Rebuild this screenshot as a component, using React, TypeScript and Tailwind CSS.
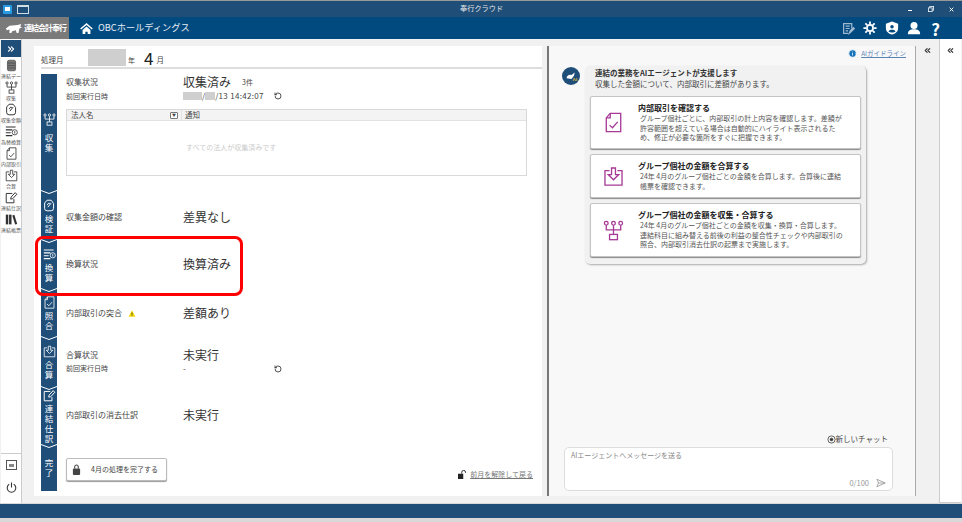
import React from 'react';
import { ChevronsLeft, ChevronsRight, Info, RotateCcw } from 'lucide-react';

type IconProps = { className?: string };

const Tree = ({ className }: IconProps) => (
  <svg viewBox="0 0 16 16" fill="none" stroke="currentColor" strokeWidth="1" className={className}>
    <circle cx="2.5" cy="2.5" r="1.4" />
    <circle cx="8" cy="2.5" r="1.4" />
    <circle cx="13.5" cy="2.5" r="1.4" />
    <path d="M2.5 4v3.5h11V4M8 4v7" />
    <rect x="5" y="11" width="6" height="4" />
  </svg>
);

const Coin = ({ className }: IconProps) => (
  <svg viewBox="0 0 16 16" fill="none" stroke="currentColor" strokeWidth="1.2" className={className}>
    <path d="M5 1.5h5l3 4v6a3 3 0 0 1-3 3H5a3 3 0 0 1-3-3V5z" />
    <path d="M6 10l4-5M5.5 7.5a2 2 0 0 1 3-2" />
  </svg>
);

const Convert = ({ className }: IconProps) => (
  <svg viewBox="0 0 16 16" fill="none" stroke="currentColor" strokeWidth="1.4" className={className}>
    <path d="M1 2.5h12M1 6h8M1 9.5h6M1 13h8" />
    <circle cx="12" cy="9" r="3.2" strokeWidth="1" />
    <path d="M12 7.5v3" strokeWidth="1" />
  </svg>
);

const DocCheck = ({ className }: IconProps) => (
  <svg viewBox="0 0 16 16" fill="none" stroke="currentColor" strokeWidth="1" className={className}>
    <path d="M5.5 1H13.5V15H2.5V4.5z" />
    <path d="M5.5 1v3.5h-3M5 10l2.2 2 4-4.5" />
  </svg>
);

const Tray = ({ className }: IconProps) => (
  <svg viewBox="0 0 16 16" fill="none" stroke="currentColor" strokeWidth="1" className={className}>
    <path d="M5 3.5H1.5v11h13v-11H11" />
    <path d="M6.5 1.5h3v5H12L8 10.5 4 6.500h2.500z" />
  </svg>
);

const Journal = ({ className }: IconProps) => (
  <svg viewBox="0 0 16 16" fill="none" stroke="currentColor" strokeWidth="1.2" className={className}>
    <path d="M9 3H1.500v11.500H11V10" />
    <path d="M7 10l.5-2.500L12.500 2l2 2-5 5.500z" />
  </svg>
);

const Books = ({ className }: IconProps) => (
  <svg viewBox="0 0 16 16" fill="currentColor" className={className}>
    <rect x="1" y="2" width="3" height="12" />
    <rect x="5" y="2" width="3" height="12" />
    <path d="M9 3l2.500-.8L15 13.400l-2.600.8z" />
  </svg>
);

const Database = ({ className }: IconProps) => (
  <svg viewBox="0 0 16 16" fill="#777" stroke="#444" strokeWidth="0.8" className={className}>
    <rect x="3" y="1.500" width="10" height="13" rx="2" />
    <path d="M3 5h10M3 8h10M3 11h10" fill="none" />
  </svg>
);

const sideItems = [
  { label: '連結デー', Icon: Database },
  { label: '収集', Icon: Tree },
  { label: '収集金額', Icon: Coin },
  { label: '為替換算', Icon: Convert },
  { label: '内部取引', Icon: DocCheck },
  { label: '合算', Icon: Tray },
  { label: '連結仕訳', Icon: Journal },
  { label: '連結帳票', Icon: Books },
];

const Chevron = () => (
  <svg viewBox="0 0 16 5" className="absolute -top-[2px] left-0 h-[5px] w-4" fill="none" stroke="white" strokeWidth="1">
    <path d="M0 .5 8 3.500 16 .5" />
  </svg>
);

const Segment = ({
  chars,
  Icon,
  first,
  height,
  children,
}: {
  chars: string;
  Icon?: React.FC<IconProps>;
  first?: boolean;
  height: string;
  children: React.ReactNode;
}) => (
  <div className={`flex ${height}`}>
    <div className="relative flex w-4 shrink-0 flex-col items-center justify-center bg-[#1f4e79] text-white">
      {!first && <Chevron />}
      {Icon && <Icon className={`h-[13px] w-[13px] ${first ? 'mb-[8px]' : 'mb-[3px]'}`} />}
      <span className="text-[8.500px] leading-[16px] tracking-[1.500px] [writing-mode:vertical-rl]">{chars}</span>
    </div>
    <div className="min-w-0 flex-1 pl-[9px]">{children}</div>
  </div>
);

const StatusRow = ({
  label,
  value,
  extra,
  className,
}: {
  label: React.ReactNode;
  value: string;
  extra?: React.ReactNode;
  className?: string;
}) => (
  <div className={`flex items-center ${className ?? ''}`}>
    <div className="flex w-[117px] items-center text-[8px] leading-[12px] text-[#444]">{label}</div>
    <div className="text-[12px] leading-[16px] text-[#333]">{value}</div>
    {extra}
  </div>
);

const ActionCard = ({
  Icon,
  iconSize,
  title,
  lines,
  height,
}: {
  Icon: React.FC<IconProps>;
  iconSize: string;
  title: string;
  lines: string[];
  height: string;
}) => (
  <div className={`flex rounded-[2px] border border-[#c4c4c4] bg-white shadow-[0_1px_1px_#888] ${height}`}>
    <div className="flex w-[47px] shrink-0 items-center justify-center pr-[3px] text-[#a63a96]">
      <Icon className={iconSize} />
    </div>
    <div className="pt-[5px]">
      <div className="text-[8px] leading-[12px] font-bold text-[#222]">{title}</div>
      <div className="pl-[2px] text-[7px] leading-[9.500px] text-[#555]">
        {lines.map((l) => (
          <div key={l}>{l}</div>
        ))}
      </div>
    </div>
  </div>
);

export default function App() {
  return (
    <div className="relative flex h-[522px] w-[962px] flex-col overflow-hidden bg-[#d9d9d9] font-['Noto_Sans_CJK_JP','Noto_Sans',sans-serif]">
      {/* window title */}
      <div className="relative flex h-[17px] shrink-0 items-center border-t border-[#999] bg-[#1f4e79] pl-[3px] text-white">
        <div className="flex h-[9px] w-[9px] items-center justify-center rounded-[1px] bg-[#2a9be0]">
          <div className="h-[4px] w-[5px] bg-white" />
        </div>
        <div className="ml-[5px] h-[9px] w-[12px] border border-t-2 border-white/80" />
        <div className="flex-1 pl-[431px] text-[7.200px] leading-none text-[#e8e8e8]">奉行クラウド</div>
        <div className="flex w-[54px] items-center justify-between pr-[8px] text-[8px] leading-none">
          <span className="mt-[3px] h-px w-[4px] bg-white" />
          <svg viewBox="0 0 8 8" className="h-[6px] w-[6px]" fill="none" stroke="white">
            <rect x="2.500" y=".5" width="5" height="5" />
            <rect x=".5" y="2.500" width="5" height="5" fill="#1f4e79" />
          </svg>
          <svg viewBox="0 0 8 8" className="h-[5px] w-[5px]" stroke="white" strokeWidth="1.500">
            <path d="M1 1l6 6M7 1 1 7" />
          </svg>
        </div>
      </div>

      {/* app header */}
      <div className="flex h-[22px] shrink-0 items-center bg-[#004a80] text-white">
        <div className="flex h-full w-[69px] items-center bg-[#7a7a7a] pl-[5px]">
          <svg viewBox="0 0 20 12" className="h-[11px] w-[18px] shrink-0" fill="white">
            <path d="M1 6 5 3l9-1 4-1-1 3 2 1-3 1-1 5h-2l-1-3-4 1-1 2H5l0-4-3 1z" />
          </svg>
          <span className="ml-px text-[8px] leading-none font-bold tracking-[-1px] whitespace-nowrap">連結会計奉行</span>
        </div>
        <svg viewBox="0 0 16 14" className="ml-[11px] h-[11px] w-[13px]" fill="white">
          <path d="M8 0 0 7l1.200 1.200L8 2.400l6.800 5.800L16 7z" />
          <path d="M3 9 8 4.500 13 9v5H9.500v-3h-3v3H3z" />
        </svg>
        <span className="ml-[5px] text-[9.200px] leading-none text-[#e8eef5]">OBCホールディングス</span>
        <div className="ml-auto flex items-center gap-[8px] pr-[22px]">
          <svg viewBox="0 0 16 16" className="h-[13px] w-[13px]" fill="none" stroke="#9fb8d0" strokeWidth="1.500">
            <path d="M12 8V2H2v12h6M4.500 5h5M4.500 8h5M4.500 11h3" />
            <path d="M9 14l1-3 4-4 1.200 1.200-4 4z" fill="#9fb8d0" />
          </svg>
          <svg viewBox="0 0 16 16" className="h-[14px] w-[14px]" fill="none" stroke="white" strokeWidth="2">
            <circle cx="8" cy="8" r="3.500" />
            <path d="M8 .5v3M8 12.500v3M.5 8h3M12.500 8h3M2.700 2.700l2.100 2.100M11.200 11.200l2.100 2.100M13.300 2.700l-2.100 2.100M4.800 11.200l-2.100 2.100" />
          </svg>
          <svg viewBox="0 0 16 16" className="h-[14px] w-[14px]">
            <path d="M8 .5 15 3v5c0 4-3 6.500-7 7.500C4 14.500 1 12 1 8V3z" fill="white" />
            <circle cx="8" cy="6.500" r="2" fill="#004a80" />
            <path d="M4 12c.5-2.500 7.500-2.500 8 0-2 1.500-6 1.500-8 0z" fill="#004a80" />
          </svg>
          <svg viewBox="0 0 16 16" className="h-[14px] w-[14px]" fill="white">
            <circle cx="8" cy="5" r="4" />
            <path d="M1 15c0-4 3-5.500 7-5.500s7 1.500 7 5.500z" />
          </svg>
          <span className="ml-[2px] text-[17px] leading-none font-bold">?</span>
        </div>
      </div>

      {/* body */}
      <div className="flex min-h-0 flex-1 bg-[#f1f1f1]">
        {/* side menu */}
        <div className="ml-px flex w-[21px] shrink-0 flex-col border-r border-[#ccc] bg-white pt-px">
          <div className="flex h-[17px] shrink-0 items-center justify-center bg-[#1f4e79] text-white">
            <ChevronsRight className="h-[10px] w-[10px]" strokeWidth={3} />
          </div>
          {sideItems.map(({ label, Icon }) => (
            <div key={label} className="flex h-[22px] shrink-0 flex-col items-center justify-end text-[#333]">
              <Icon className="h-[13px] w-[13px]" />
              <span className="text-[5px] leading-[7px] whitespace-nowrap text-[#555]">{label}</span>
            </div>
          ))}
          <div className="mt-auto flex h-[50px] shrink-0 flex-col items-center border-t border-[#ccc] pt-[6px] text-[#333]">
            <div className="flex h-[10px] w-[11px] items-center justify-center border border-[#555]">
              <div className="h-[3px] w-[5px] bg-[#888]" />
            </div>
            <svg viewBox="0 0 12 12" className="mt-[12px] h-[11px] w-[11px]" fill="none" stroke="#333" strokeWidth="1.200">
              <path d="M3.500 2.500a4.700 4.700 0 1 0 5 0M6 .5V6" />
            </svg>
          </div>
        </div>

        {/* main panel */}
        <div className="my-[7px] ml-[12px] flex w-[508px] shrink-0 flex-col bg-white pl-[7px]">
          <div className="flex h-[23px] shrink-0 items-start border-b-2 border-[#ddd]">
            <span className="mt-[9px] w-[47px] text-[7.500px] leading-[10px] text-[#444]">処理月</span>
            <div className="mt-[3px] h-[17px] w-[38px] bg-[#cfcfcf]" />
            <span className="mt-[9px] ml-[2px] text-[7px] leading-[10px] text-[#444]">年</span>
            <span className="mt-[2px] ml-[9px] text-[17px] leading-[20px] text-[#222]">4</span>
            <span className="mt-[9px] ml-[3px] text-[7.500px] leading-[10px] text-[#444]">月</span>
          </div>

          <div className="mt-[5px] mr-[15px] flex flex-col">
            <Segment chars="収集" Icon={Tree} first height="h-[118px]">
              <StatusRow
                label="収集状況"
                value="収集済み"
                extra={<span className="ml-[11px] text-[7px] leading-none text-[#444]">3件</span>}
              />
              <div className="flex h-[12px] items-center">
                <span className="w-[117px] text-[7px] text-[#444]">前回実行日時</span>
                <span className="h-[8px] w-[19px] bg-[#cfcfcf]" />
                <span className="text-[8px] text-[#444]">/</span>
                <span className="h-[8px] w-[10px] bg-[#cfcfcf]" />
                <span className="text-[8px] tracking-[0.300px] whitespace-nowrap text-[#444]">/13 14:42:07</span>
                <RotateCcw className="ml-[10px] h-[8px] w-[8px] text-[#333]" strokeWidth={2.500} />
              </div>
              <div className="mt-[7px] h-[67px] border border-[#d9d9d9]">
                <div className="flex h-[11px] items-center border-b border-[#e2e2e2] bg-[#f3f3f3] text-[7.500px] leading-none text-[#444]">
                  <div className="flex h-full w-[115px] items-center justify-between border-r border-[#e2e2e2] pr-[3px] pl-[4px]">
                    <span>法人名</span>
                    <span className="flex h-[7px] w-[8px] items-center justify-center rounded-[1px] border border-[#777] bg-white text-[4px]">▼</span>
                  </div>
                  <span className="pl-[3px]">通知</span>
                </div>
                <div className="pt-[21px] pl-[119px] text-[7px] leading-[10px] text-[#ccc]">すべての法人が収集済みです</div>
              </div>
            </Segment>

            <Segment chars="検証" Icon={Coin} height="h-[49px]">
              <StatusRow className="mt-[17px]" label="収集金額の確認" value="差異なし" />
            </Segment>

            <Segment chars="換算" Icon={Convert} height="h-[49px]">
              <StatusRow className="mt-[15px]" label="換算状況" value="換算済み" />
            </Segment>

            <Segment chars="照合" Icon={DocCheck} height="h-[48px]">
              <StatusRow
                className="mt-[15px]"
                label={
                  <>
                    内部取引の突合
                    <svg viewBox="0 0 12 11" className="ml-[6px] h-[7px] w-[8px]">
                      <path d="M6 .5 11.500 10.500H.5z" fill="#f5d90a" />
                      <path d="M6 4v3.500M6 8.500v1" stroke="#222" strokeWidth="1.200" />
                    </svg>
                  </>
                }
                value="差額あり"
              />
            </Segment>

            <Segment chars="合算" Icon={Tray} height="h-[50px]">
              <StatusRow className="mt-[9px]" label="合算状況" value="未実行" />
              <div className="flex h-[11px] items-center">
                <span className="w-[117px] text-[7px] text-[#444]">前回実行日時</span>
                <span className="w-[91px] text-[8px] text-[#444]">-</span>
                <RotateCcw className="h-[8px] w-[8px] text-[#333]" strokeWidth={2.500} />
              </div>
            </Segment>

            <Segment chars="連結仕訳" Icon={Journal} height="h-[58px]">
              <StatusRow className="mt-[19px]" label="内部取引の消去仕訳" value="未実行" />
            </Segment>

            <Segment chars="完了" height="h-[45px]">
              <div className="-mr-[6px] flex items-end justify-between pt-[12px]">
                <div className="flex h-[23px] w-[101px] items-center rounded-[2px] border border-[#bbb] bg-white pl-[5px] shadow-[0_1px_1px_#999]">
                  <svg viewBox="0 0 10 12" className="h-[11px] w-[9px]" fill="#444">
                    <rect x="1" y="5" width="8" height="7" rx="1" />
                    <path d="M3 5V3a2 2 0 0 1 4 0v2" fill="none" stroke="#444" strokeWidth="1.200" />
                  </svg>
                  <span className="ml-[10px] text-[7px] leading-none text-[#444]">4月の処理を完了する</span>
                </div>
                <div className="mb-[2px] flex items-center">
                  <svg viewBox="0 0 12 12" className="h-[9px] w-[9px]" fill="#222">
                    <rect x="0" y="5" width="7" height="7" />
                    <path d="M5 5V3a2.500 2.500 0 0 1 5 0v1" fill="none" stroke="#222" strokeWidth="1.200" />
                  </svg>
                  <span className="ml-[3px] text-[7px] leading-none whitespace-nowrap text-[#777] underline">前月を解除して戻る</span>
                </div>
              </div>
            </Segment>
          </div>
        </div>

        {/* agent panel */}
        <div className="my-[7px] ml-[5px] flex w-[369px] shrink-0 flex-col border-r border-l-2 border-r-[#aaa] border-l-[#777] bg-[#f8f8f8]">
          <div className="flex h-[13px] shrink-0 items-center justify-end pt-[2px] pr-[9px]">
            <Info className="h-[9px] w-[9px] fill-[#1b75bb] text-white" strokeWidth={2} />
            <span className="ml-[4px] text-[6.500px] leading-none text-[#5b84b5] underline">AIガイドライン</span>
          </div>
          <div className="mt-[7px] flex items-start pl-[13px]">
            <div className="mt-px flex h-[18px] w-[18px] shrink-0 items-center justify-center rounded-full bg-[#1f4e79]">
              <svg viewBox="0 0 16 16" className="h-[13px] w-[13px]">
                <path d="M2 10c0-3 3-5 6-4l4-3-1 4-3 4z" fill="white" />
                <path d="M10 13.500 11.500 10 13 13.500M14.500 10v3.500" fill="none" stroke="#e8b93a" strokeWidth="1" />
              </svg>
            </div>
            <div className="ml-[5px] h-[198px] w-[281px] rounded-[5px] bg-[#f1f1f1] px-[5px] pt-[1px] shadow-[1px_1px_2px_#aaa]">
              <div className="pl-[5px] text-[7.500px] leading-[11px] font-bold text-[#333]">連結の業務をAIエージェントが支援します</div>
              <div className="pl-[5px] text-[7.500px] leading-[11px] text-[#444]">収集した金額について、内部取引に差額があります。</div>
              <div className="mt-[7px] flex flex-col gap-[5px]">
                <ActionCard
                  Icon={DocCheck}
                  iconSize="h-[21px] w-[21px]"
                  height="h-[53px]"
                  title="内部取引を確認する"
                  lines={[
                    'グループ個社ごとに、内部取引の計上内容を確認します。差額が',
                    '許容範囲を超えている場合は自動的にハイライト表示されるた',
                    'め、修正が必要な箇所をすぐに把握できます。',
                  ]}
                />
                <ActionCard
                  Icon={Tray}
                  iconSize="h-[21px] w-[21px]"
                  height="h-[44px]"
                  title="グループ個社の金額を合算する"
                  lines={['24年 4月のグループ個社ごとの金額を合算します。合算後に連結', '帳票を確認できます。']}
                />
                <ActionCard
                  Icon={Tree}
                  iconSize="h-[21px] w-[21px]"
                  height="h-[54px]"
                  title="グループ個社の金額を収集・合算する"
                  lines={[
                    '24年 4月のグループ個社ごとの金額を収集・換算・合算します。',
                    '連結科目に組み替える前後の利益の整合性チェックや内部取引の',
                    '照合、内部取引消去仕訳の起票まで実施します。',
                  ]}
                />
              </div>
            </div>
          </div>
          <div className="mt-auto flex items-center justify-end pr-[27px] pb-[3px]">
            <svg viewBox="0 0 12 12" className="h-[9px] w-[9px]" fill="none" stroke="#333">
              <circle cx="6" cy="6" r="4.800" />
              <circle cx="6" cy="6" r="1.800" fill="#333" />
            </svg>
            <span className="text-[7.500px] leading-[10px] text-[#444]">新しいチャット</span>
          </div>
          <div className="mb-[5px] ml-[15px] flex h-[44px] w-[329px] flex-col rounded-[5px] border border-[#ddd] bg-white px-[6px] pt-[2px]">
            <span className="text-[7px] leading-[10px] text-[#888]">AIエージェントへメッセージを送る</span>
            <div className="mt-auto flex items-center justify-end gap-[7px] pb-[2px] text-[#999]">
              <span className="text-[7.500px] leading-none">0/100</span>
              <svg viewBox="0 0 12 12" className="h-[10px] w-[10px]" fill="none" stroke="currentColor">
                <path d="M1 1.500 11 6 1 10.500 3 6zM3 6h8" />
              </svg>
            </div>
          </div>
        </div>

        {/* collapsed panes */}
        <div className="flex w-[23px] shrink-0 justify-center pt-[7px] text-[#333]">
          <ChevronsLeft className="h-[9px] w-[9px]" strokeWidth={3} />
        </div>
        <div className="flex w-[22px] shrink-0 justify-center border-b border-l border-[#ccc] bg-white pt-[7px] text-[#333]">
          <ChevronsLeft className="h-[9px] w-[9px]" strokeWidth={3} />
        </div>
      </div>

      {/* status bar */}
      <div className="mt-px h-[14px] shrink-0 bg-[#1f4e79]" />
      <div className="h-[4px] shrink-0 bg-[#d9d9d9]" />

      {/* red callout */}
      <div className="absolute top-[236px] left-[35px] h-[60px] w-[208px] rounded-[8px] border-[3px] border-[#f00]" />
    </div>
  );
}
